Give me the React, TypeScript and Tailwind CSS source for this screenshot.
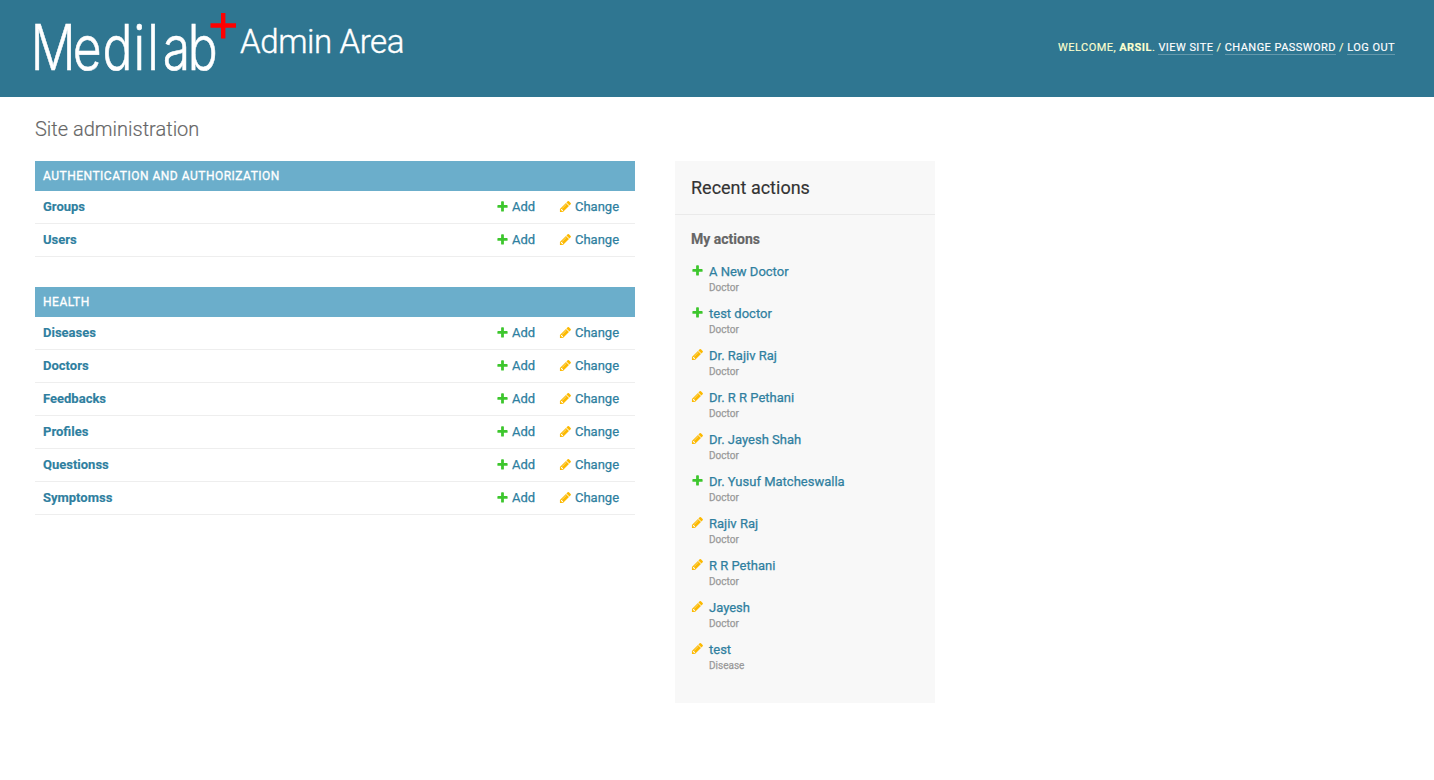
import React from "react";

type Kind = "add" | "change";

const apps: { name: string; models: string[] }[] = [
  { name: "Authentication and Authorization", models: ["Groups", "Users"] },
  { name: "Health", models: ["Diseases", "Doctors", "Feedbacks", "Profiles", "Questionss", "Symptomss"] },
];

const actions: { kind: Kind; label: string; type: string }[] = [
  { kind: "add", label: "A New Doctor", type: "Doctor" },
  { kind: "add", label: "test doctor", type: "Doctor" },
  { kind: "change", label: "Dr. Rajiv Raj", type: "Doctor" },
  { kind: "change", label: "Dr. R R Pethani", type: "Doctor" },
  { kind: "change", label: "Dr. Jayesh Shah", type: "Doctor" },
  { kind: "add", label: "Dr. Yusuf Matcheswalla", type: "Doctor" },
  { kind: "change", label: "Rajiv Raj", type: "Doctor" },
  { kind: "change", label: "R R Pethani", type: "Doctor" },
  { kind: "change", label: "Jayesh", type: "Doctor" },
  { kind: "change", label: "test", type: "Disease" },
];

function Icon({ kind }: { kind: Kind }) {
  return (
    <svg width="13" height="13" viewBox="0 0 1792 1792" className="shrink-0" aria-hidden="true">
      {kind === "add" ? (
        <path
          fill="#3dc62d"
          d="M1600 796v192q0 40-28 68t-68 28h-416v416q0 40-28 68t-68 28h-192q-40 0-68-28t-28-68v-416h-416q-40 0-68-28t-28-68v-192q0-40 28-68t68-28h416v-416q0-40 28-68t68-28h192q40 0 68 28t28 68v416h416q40 0 68 28t28 68z"
        />
      ) : (
        <path
          fill="#fcb900"
          d="M491 1536l91-91-235-235-91 91v107h128v128h107zm523-928q0-22-22-22-10 0-17 7l-542 542q-7 7-7 17 0 22 22 22 10 0 17-7l542-542q7-7 7-17zm-54-192l416 416-832 832h-416v-416zm683 96q0 53-37 90l-166 166-416-416 166-165q36-38 90-38 53 0 91 38l235 234q37 39 37 91z"
        />
      )}
    </svg>
  );
}

function Logo() {
  return (
    <svg
      width="211"
      height="94"
      viewBox="-10 -13 211 94"
      className="-ml-[10px] shrink-0"
      role="img"
      aria-label="Medilab"
    >
      <text
        transform="scale(0.79 1)"
        x="-5.5 47.9 85.6 124.7 142.2 161.8 193.3"
        y="57"
        fill="#fff"
        stroke="#fff"
        strokeWidth="0.6"
        className="font-[Inter,sans-serif] text-[63px] font-light leading-none"
      >
        Medilab
      </text>
      <path d="M188.2 0v25.5M175.5 12.5h25.5" stroke="#f00" strokeWidth="4.4" />
    </svg>
  );
}

function Header() {
  const link = "border-b border-white/25 text-white";
  return (
    <header className="flex h-[97px] items-start justify-between bg-[#2f7691] pl-[35px] pr-[39px]">
      <h1 className="flex items-start text-white">
        <Logo />
        <span className="ml-[4px] mt-[22px] text-[33px] font-light leading-10 tracking-[-0.4px] [-webkit-text-stroke:0.4px]">
          Admin Area
        </span>
      </h1>
      <div className="mt-[41px] whitespace-nowrap text-[11px] font-normal uppercase leading-[13px] tracking-[0.45px] text-[#fcffce] [-webkit-text-stroke:0.15px]">
        Welcome, <strong className="font-bold">Arsil</strong>. <a className={link}>View site</a> /{" "}
        <a className={link}>Change password</a> / <a className={link}>Log out</a>
      </div>
    </header>
  );
}

function AppModule({ name, models }: { name: string; models: string[] }) {
  return (
    <section className="mb-[30px]">
      <h2 className="h-[30px] bg-[#6baecb] px-2 text-[12px] font-normal uppercase leading-[30px] tracking-[0.5px] text-white [-webkit-text-stroke:0.3px]">
        {name}
      </h2>
      {models.map((model) => (
        <div key={model} className="flex h-[33px] items-center border-b border-[#eee] px-2 text-[13px] text-[#2f7f9f]">
          <a className="flex-1 font-bold [-webkit-text-stroke:0.15px]">{model}</a>
          <a className="flex w-[63px] items-center gap-[3px] font-normal [-webkit-text-stroke:0.25px]">
            <span className="-mt-[2px]">
              <Icon kind="add" />
            </span>
            Add
          </a>
          <a className="mr-2 flex w-[60px] items-center gap-[3px] font-normal [-webkit-text-stroke:0.25px]">
            <span className="-mt-[2px]">
              <Icon kind="change" />
            </span>
            Change
          </a>
        </div>
      ))}
    </section>
  );
}

export default function App() {
  return (
    <div className="min-h-[780px] bg-white font-[Roboto,sans-serif]">
      <Header />
      <main className="px-[35px] pt-5">
        <h1 className="mb-5 text-[20px] font-light leading-6 text-[#666] [-webkit-text-stroke:0.15px]">
          Site administration
        </h1>
        <div className="flex items-start gap-10">
          <div className="w-[600px]">
            {apps.map((app) => (
              <AppModule key={app.name} name={app.name} models={app.models} />
            ))}
          </div>
          <aside className="h-[542px] w-[260px] bg-[#f8f8f8]">
            <h2 className="h-[54px] border-b border-[#eaeaea] px-4 text-[18px] font-normal leading-[53px] text-[#333] [-webkit-text-stroke:0.15px]">
              Recent actions
            </h2>
            <h3 className="mt-[15px] px-4 text-[14px] font-bold leading-[18px] text-[#666] [-webkit-text-stroke:0.15px]">
              My actions
            </h3>
            <ul className="mt-[15px] px-4">
              {actions.map((action) => (
                <li key={action.label} className="flex h-[42px] gap-[5px] [-webkit-text-stroke:0.25px]">
                  <span className="mt-[1px]">
                    <Icon kind={action.kind} />
                  </span>
                  <div>
                    <a className="block text-[13px] font-normal leading-[18px] text-[#2f7f9f]">{action.label}</a>
                    <span className="block text-[10px] font-normal leading-[14px] text-[#999]">{action.type}</span>
                  </div>
                </li>
              ))}
            </ul>
          </aside>
        </div>
      </main>
    </div>
  );
}
